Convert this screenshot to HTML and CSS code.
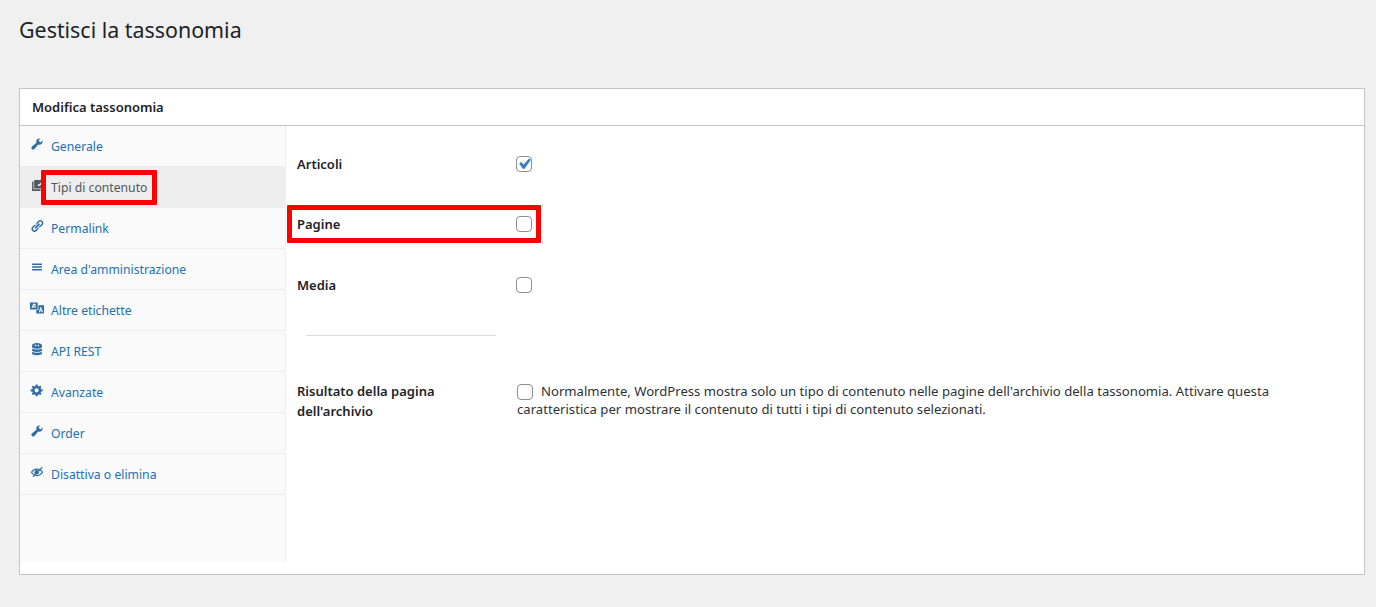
FILE: index.html
```html
<!DOCTYPE html>
<html lang="it">
<head>
<meta charset="utf-8">
<title>Gestisci la tassonomia</title>
<link rel="stylesheet" href="styles.css">
</head>
<body>
<div class="wrap">
  <h1 class="title">Gestisci la tassonomia</h1>
  <section class="card">
    <h2 class="card-head">Modifica tassonomia</h2>
    <div class="card-body">
      <ul class="tabs">
        <li class="tab"><a href="#"><svg class="ico" viewBox="0 0 20 20"><path d="M16.68 9.77c-1.34 1.34-3.3 1.67-4.95.99l-5.41 6.52c-.99.99-2.59.99-3.58 0s-.99-2.59 0-3.57l6.52-5.42c-.68-1.65-.35-3.61.99-4.95 1.28-1.28 3.12-1.62 4.72-1.06l-2.89 2.89 2.82 2.82 2.86-2.87c.53 1.58.18 3.39-1.08 4.67z"/></svg>Generale</a></li>
        <li class="tab active"><a href="#"><svg class="ico" viewBox="0 0 20 20"><path d="M6 3h9l-3.500 3.500v1.800l-.7 3.400 3.400-.7 2.800-2.800V15H6z"/><path d="M3 5h2v11h10v2.500H3z"/><path d="M17 .5l2.200 2.200-6.200 6.300-2.700.6.600-2.800z"/></svg>Tipi di contenuto</a></li>
        <li class="tab"><a href="#"><svg class="ico" viewBox="0 0 20 20"><path d="M17.74 2.76c1.68 1.69 1.68 4.41 0 6.1l-1.53 1.52c-1.12 1.12-2.7 1.47-4.14 1.09l2.62-2.61.76-.77.76-.76c.84-.84.84-2.2 0-3.04-.84-.85-2.2-.85-3.04 0l-.77.76-3.38 3.38c-.37-1.44-.02-3.02 1.1-4.14l1.52-1.53c1.69-1.68 4.42-1.68 6.1 0zM8.59 13.43l5.34-5.34c.42-.42.42-1.1 0-1.52-.44-.43-1.13-.39-1.53 0l-5.33 5.34c-.42.42-.42 1.1 0 1.52.44.43 1.13.39 1.52 0zm-.76 2.29l4.14-4.15c.38 1.44.03 3.02-1.09 4.14l-1.52 1.53c-1.69 1.68-4.41 1.68-6.1 0-1.68-1.68-1.68-4.42 0-6.1l1.53-1.52c1.12-1.12 2.7-1.47 4.14-1.1l-4.14 4.15c-.85.84-.85 2.2 0 3.05.84.84 2.2.84 3.04 0z"/></svg>Permalink</a></li>
        <li class="tab"><a href="#"><svg class="ico" viewBox="0 0 20 20"><path d="M17 7V5H3v2h14zm0 4V9H3v2h14zm0 4v-2H3v2h14z"/></svg>Area d'amministrazione</a></li>
        <li class="tab"><a href="#"><svg class="ico" viewBox="0 0 20 20"><path fill-rule="evenodd" d="M0 2h11v10H0zM4.500 4L2 10h1.700l.4-1h2.300v1H8V4zM4.700 7.800l.9-2.200h.8v2.200z"/><path fill-rule="evenodd" d="M12 6h8v12H9v-5h3zM15 8.500L12.500 16h1.600l.4-1.300h2l.4 1.300h1.600L16 8.500zM14.900 13.300l.6-2.200.6 2.200z"/></svg>Altre etichette</a></li>
        <li class="tab"><a href="#"><svg class="ico" viewBox="0 0 20 20"><path fill-rule="evenodd" d="M3 4.500C3 3 6 1.500 10 1.500s7 1.500 7 3V7c0 1.500-3 2.500-7 2.500S3 8.500 3 7zM7 4h2v2H7zM11 4h2v2h-2z"/><path d="M3 9.200c1.600 1 4 1.500 7 1.500s5.400-.5 7-1.500v2.600c0 1.500-3 2.500-7 2.500s-7-1-7-2.500z"/><path d="M3 14c1.600 1 4 1.500 7 1.500s5.400-.5 7-1.500v2.300c0 1.500-3 2.500-7 2.500s-7-1-7-2.500z"/></svg>API REST</a></li>
        <li class="tab"><a href="#"><svg class="ico" viewBox="0 0 20 20"><path d="M18 12h-2.180c-.17.7-.44 1.350-.81 1.930l1.540 1.540-2.100 2.100-1.540-1.540c-.58.36-1.230.63-1.910.79V19H8v-2.180c-.68-.16-1.330-.43-1.910-.79l-1.540 1.540-2.120-2.120 1.540-1.540c-.36-.58-.63-1.230-.79-1.910H1V9.030h2.170c.16-.7.44-1.350.8-1.940L2.430 5.550l2.100-2.100 1.540 1.540c.58-.37 1.240-.64 1.930-.81V2h3v2.180c.68.16 1.330.43 1.910.79l1.540-1.540 2.120 2.120-1.540 1.540c.36.59.64 1.240.8 1.940H18V12zm-8.500 1.500c1.660 0 3-1.340 3-3s-1.340-3-3-3-3 1.340-3 3 1.340 3 3 3z"/></svg>Avanzate</a></li>
        <li class="tab"><a href="#"><svg class="ico" viewBox="0 0 20 20"><path d="M16.68 9.770c-1.340 1.340-3.300 1.670-4.950.99l-5.410 6.520c-.99.99-2.590.99-3.580 0s-.99-2.590 0-3.570l6.520-5.420c-.68-1.650-.35-3.610.99-4.950 1.280-1.280 3.120-1.620 4.720-1.060l-2.890 2.890 2.820 2.820 2.860-2.870c.53 1.580.18 3.390-1.080 4.670z"/></svg>Order</a></li>
        <li class="tab"><a href="#"><svg class="ico" viewBox="0 0 20 20"><path fill-rule="evenodd" d="M10 5c3.800 0 7 2.300 9 5.500-2 3.200-5.200 5.500-9 5.500s-7-2.300-9-5.500C3 7.300 6.200 5 10 5zM3 10.500c1.600 2.200 4 3.800 7 3.800s5.400-1.600 7-3.800c-1.600-2.200-4-3.800-7-3.800s-5.400 1.600-7 3.800z"/><circle cx="9.500" cy="10.500" r="3.200"/><path d="M17 2.500l1.300 1.200L5 17.500l-1.300-1.200z"/></svg>Disattiva o elimina</a></li>
      </ul>
      <div class="panel">
        <div class="row">
          <label class="name">Articoli</label>
          <input class="check" type="checkbox" checked>
        </div>
        <div class="row">
          <label class="name">Pagine</label>
          <input class="check" type="checkbox">
          <span class="mark mark-row"></span>
        </div>
        <div class="row">
          <label class="name">Media</label>
          <input class="check" type="checkbox">
        </div>
        <hr class="rule">
        <div class="row-text">
          <label class="name name-wrap">Risultato della pagina dell'archivio</label>
          <p class="desc"><input class="check check-inline" type="checkbox">Normalmente, WordPress mostra solo un tipo di contenuto nelle pagine dell'archivio della tassonomia. Attivare questa caratteristica per mostrare il contenuto di tutti i tipi di contenuto selezionati.</p>
        </div>
      </div>
    </div>
    <span class="mark mark-tab"></span>
  </section>
</div>
</body>
</html>
```

FILE: styles.css
```css
* { box-sizing: border-box; }
html, body { margin: 0; padding: 0; }
body {
  background: #f0f0f1;
  color: #1d2327;
  font-family: "Noto Sans", "Open Sans", sans-serif;
  font-size: 13px;
  height: 607px;
  overflow: hidden;
}
.wrap { padding: 15px 11px 0 19px; }
.title {
  margin: 0;
  font-size: 21.400px;
  font-weight: 400;
  line-height: 29px;
  color: #1d2327;
  height: 73px;
}
.card {
  position: relative;
  height: 487px;
  background: #fff;
  border: 1px solid #c3c4c7;
}
.card-head {
  margin: 0;
  height: 37px;
  padding: 0 12px;
  font-size: 13px;
  font-weight: 600;
  line-height: 36px;
  border-bottom: 1px solid #c3c4c7;
}
.card-body { display: flex; }
.tabs {
  list-style: none;
  margin: 0;
  padding: 0;
  width: 266px;
  height: 436px;
  flex: none;
  background: #fafafa;
  border-right: 1px solid #eee;
}
.tab { height: 41px; border-bottom: 1px solid #eee; }
.tab a {
  display: flex;
  align-items: center;
  height: 40px;
  padding-left: 10px;
  color: #2271b1;
  text-decoration: none;
  font-size: 12.200px;
}
.tab.active { background: #eee; border-bottom-color: #eee; }
.tab.active a { color: #50575e; }
.ico {
  width: 14px;
  height: 14px;
  margin-right: 7px;
  margin-top: -4px;
  fill: currentColor;
  flex: none;
}
.tab:not(.active) .ico { fill: #2e6da4; }
.panel { flex: 1; padding: 18px 0 0 11px; position: relative; }
.row {
  position: relative;
  display: flex;
  align-items: center;
  height: 40px;
  margin-bottom: 20.400px;
}
.name {
  width: 219px;
  flex: none;
  font-weight: 600;
  font-size: 13px;
  line-height: 20px;
}
.name-wrap { width: 170px; margin-right: 49px; }
.check {
  appearance: none;
  -webkit-appearance: none;
  width: 16px;
  height: 16px;
  margin: 0;
  flex: none;
  background: #fff;
  border: 1px solid #8c8f94;
  border-radius: 4px;
}
.check:checked {
  background: #fff url("data:image/svg+xml,%3Csvg xmlns='http://www.w3.org/2000/svg' viewBox='0 0 20 20'%3E%3Cpath d='M15 4.500l1.900 1.300-6.300 8.900H8.700L5.200 9.600l1.800-1.700 2.700 2.600z' fill='%233582c4'/%3E%3C/svg%3E") center / 20px 20px no-repeat;
}
.check-inline { display: inline-block; vertical-align: -4px; margin-right: 8px; }
.rule {
  margin: 30px 0 0 9px;
  width: 190px;
  height: 1px;
  border: 0;
  background: #dcdcde;
}
.row-text { display: flex; margin-top: 45px; }
.desc {
  margin: 0;
  flex: 1;
  padding: 1px 80px 0 1px;
  font-size: 13.140px;
  line-height: 18px;
  color: #2c3338;
}
.mark {
  position: absolute;
  border: 5px solid #ff0000;
  border-radius: 1px;
  pointer-events: none;
}
.mark-row { left: -10px; top: 1px; width: 254px; height: 38px; }
.mark-tab { left: 21px; top: 81px; width: 116px; height: 35px; }
```
